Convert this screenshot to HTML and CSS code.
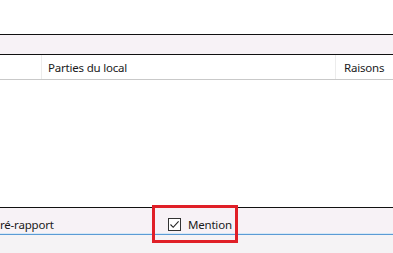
FILE: index.html
```html
<!DOCTYPE html>
<html lang="fr">
<head>
  <meta charset="UTF-8" />
  <title>Liste</title>
  <link rel="stylesheet" href="styles.css">
</head>
<body>
  <div class="page">
    <div class="top-space"></div>
    <div class="toolbar"></div>

    <div class="grid-header">
      <div class="col col-first"></div>
      <div class="col col-parts">Parties du local</div>
      <div class="col col-reasons">Raisons</div>
    </div>

    <div class="grid-body"></div>

    <div class="footer">
      <div class="footer-label">ré-rapport</div>
      <label class="check-item">
        <span class="check-box">
          <svg width="11" height="11" viewBox="0 0 11 11">
            <path d="M1.5 5.5 L4.2 8.3 L9.6 2.4" fill="none" stroke="#222" stroke-width="1.1"/>
          </svg>
        </span>
        <span class="check-text">Mention</span>
      </label>
      <div class="highlight"></div>
    </div>
    <div class="bottom-strip"></div>
  </div>
</body>
</html>
```

FILE: styles.css
```css
body {
  margin: 0;
  background: #fff;
  font-family: "Noto Sans", "Open Sans", sans-serif;
  font-size: 11.5px;
  letter-spacing: -0.2px;
  color: #1a1a1a;
}

.page {
  width: 393px;
  height: 253px;
  overflow: hidden;
  display: flex;
  flex-direction: column;
}

.top-space {
  height: 34px;
}

.toolbar {
  height: 19px;
  background: #f7f2f6;
  border-top: 1px solid #111;
  border-bottom: 1px solid #111;
}

.grid-header {
  display: flex;
  height: 24px;
  border-bottom: 1px solid #c9c9c9;
}

.col {
  display: flex;
  align-items: center;
  white-space: nowrap;
}

.col-first {
  width: 41px;
  border-right: 1px solid #ececec;
}

.col-parts {
  width: 287px;
  padding-left: 6px;
  border-right: 1px solid #ececec;
}

.col-reasons {
  padding-left: 8px;
}

.grid-body {
  height: 127px;
}

.footer {
  position: relative;
  display: flex;
  align-items: center;
  height: 26px;
  background: #f7f2f6;
  border-top: 1px solid #111;
  border-bottom: 1px solid #5b9bd5;
  box-shadow: inset 0 -1px 0 #d6e8f6;
}

.footer-label {
  width: 168px;
  padding-top: 6px;
}

.check-item {
  display: flex;
  align-items: center;
  gap: 7px;
  padding-top: 7px;
}

.check-box {
  width: 11px;
  height: 11px;
  border: 1px solid #333;
  background: #fff;
  display: flex;
}

.highlight {
  position: absolute;
  left: 152px;
  top: -3px;
  width: 80px;
  height: 32px;
  border: 3px solid #e01f27;
}

.bottom-strip {
  flex: 1;
  background: #f5f3f5;
}
```
